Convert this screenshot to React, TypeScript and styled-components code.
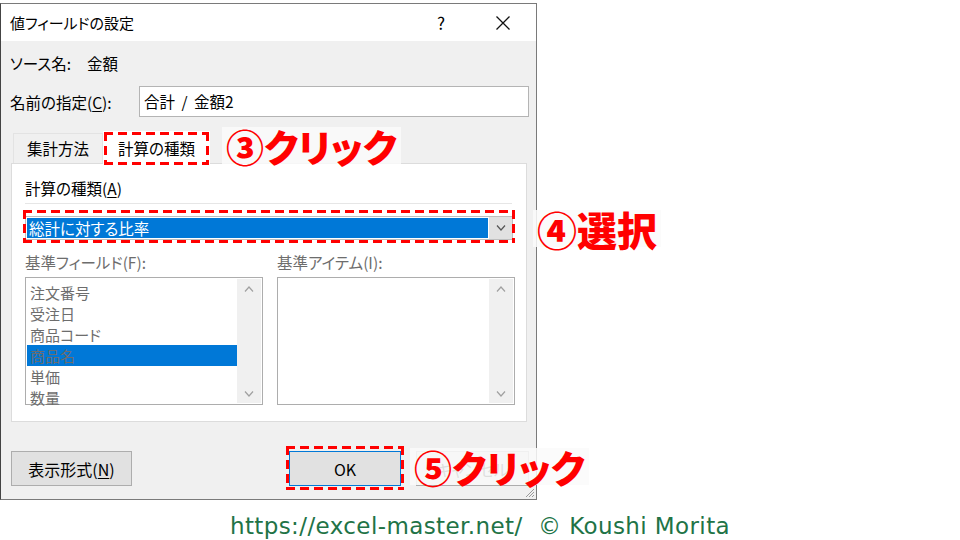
import React from "react";
import { createGlobalStyle, styled, css } from "styled-components";

const GlobalStyle = createGlobalStyle`
  html, body {
    margin: 0;
    padding: 0;
    background: #ffffff;
  }
  #root {
    width: 960px;
    height: 540px;
    overflow: hidden;
  }
`;

const uiFont = css`
  font-family: "Noto Sans CJK JP", "Noto Sans", sans-serif;
  font-feature-settings: "palt";
`;

// red dashed marker drawn around a highlighted control
const dashed = (top: number, right: number, bottom: number, left: number) => css`
  position: relative;
  &::after {
    content: "";
    position: absolute;
    top: -${top}px;
    right: -${right}px;
    bottom: -${bottom}px;
    left: -${left}px;
    pointer-events: none;
    z-index: 3;
    background:
      repeating-linear-gradient(90deg, #ff0000 0 9px, transparent 9px 14px) top left / 100% 3px no-repeat,
      repeating-linear-gradient(90deg, #ff0000 0 9px, transparent 9px 14px) bottom left / 100% 3px no-repeat,
      repeating-linear-gradient(180deg, #ff0000 0 9px, transparent 9px 14px) top left / 3px 100% no-repeat,
      repeating-linear-gradient(180deg, #ff0000 0 9px, transparent 9px 14px) top right / 3px 100% no-repeat;
  }
`;

const Page = styled.div`
  position: relative;
  width: 960px;
  height: 540px;
  padding-top: 3px;
  box-sizing: border-box;
`;

const Dialog = styled.div`
  position: relative;
  width: 537px;
  border: 1px solid #7a7a7a;
  border-left-color: #444;
  box-sizing: border-box;
  background: #f0f0f0;
  ${uiFont};
  color: #000;
`;

const TitleBar = styled.div`
  display: flex;
  align-items: center;
  height: 37px;
  background: #ffffff;
  padding-left: 9px;
`;

const Title = styled.div`
  flex: 1;
  font-size: 15px;
`;

const TitleButton = styled.div<{ $w: number }>`
  display: flex;
  align-items: center;
  justify-content: center;
  width: ${p => p.$w}px;
  height: 37px;
  font-size: 17px;
`;

const Body = styled.div`
  padding: 0 7px 13px 9px;
  font-size: 15.5px;
`;

const SourceRow = styled.div`
  margin-top: 11px;
  line-height: 22px;
  display: flex;
  gap: 16px;
`;

const NameRow = styled.div`
  margin-top: 12px;
  display: flex;
  align-items: center;
`;

const NameLabel = styled.div`
  width: 129px;
`;

const NameInput = styled.div`
  flex: 1;
  height: 31px;
  box-sizing: border-box;
  border: 1px solid #b4b4b4;
  background: #fff;
  padding-left: 4px;
  line-height: 29px;
  word-spacing: 3px;
`;

const Key = styled.span`
  text-decoration: underline;
  text-underline-offset: 2px;
`;

const TabStrip = styled.div`
  margin-top: 14px;
  margin-left: 3px;
  display: flex;
  align-items: flex-end;
  height: 32px;
`;

const Tab = styled.div<{ $active?: boolean }>`
  box-sizing: border-box;
  padding: 0 ${p => (p.$active ? 14 : 13)}px;
  line-height: ${p => (p.$active ? 32 : 29)}px;
  height: ${p => (p.$active ? 33 : 30)}px;
  margin-bottom: ${p => (p.$active ? -1 : 0)}px;
  background: ${p => (p.$active ? "#ffffff" : "#f0f0f0")};
  border: 1px solid ${p => (p.$active ? "#ffffff" : "#e3e3e3")};
  border-bottom: none;
  z-index: 1;
  ${p => p.$active && dashed(0, 0, 1, 0)}
`;

const Panel = styled.div`
  margin: 0 2px 0 1px;
  height: 259px;
  box-sizing: border-box;
  background: #ffffff;
  border: 1px solid #dcdcdc;
  padding: 13px 13px 0 13px;
`;

const PanelLabel = styled.div`
  line-height: 22px;
`;

const Divider = styled.div`
  margin-top: 4px;
  margin-right: 1px;
  height: 1px;
  background: #e6e6e6;
`;

const Combo = styled.div`
  margin-top: 12px;
  width: 488px;
  height: 24px;
  box-sizing: border-box;
  border: 1px solid #bfbfbf;
  display: flex;
  background: #fff;
  ${dashed(7, 3, 4, 3)}
`;

const ComboValue = styled.div`
  flex: 1;
  margin: 1px;
  background: #0078d7;
  color: #ffffff;
  line-height: 20px;
  padding-left: 2px;
`;

const ComboButton = styled.div`
  width: 23px;
  background: #e1e1e1;
  display: flex;
  align-items: center;
  justify-content: center;
`;

const FieldGrid = styled.div`
  margin-top: 11px;
  display: grid;
  grid-template-columns: 238px 238px;
  column-gap: 14px;
  color: #6d6d6d;
`;

const FieldLabel = styled.div`
  line-height: 22px;
`;

const ListBox = styled.div`
  margin-top: 4px;
  height: 128px;
  box-sizing: border-box;
  border: 1px solid #adadad;
  background: #fff;
  display: flex;
  padding: 1px;
`;

const ListItems = styled.div`
  flex: 1;
  padding-top: 3px;
`;

const ListItem = styled.div<{ $selected?: boolean }>`
  height: 21px;
  line-height: 21px;
  padding-left: 3px;
  font-size: 15px;
  background: ${p => (p.$selected ? "#0078d7" : "transparent")};
  color: #6d6d6d;
  overflow: hidden;
`;

const ScrollBar = styled.div`
  width: 24px;
  background: #f0f0f0;
  display: flex;
  flex-direction: column;
  justify-content: space-between;
  align-items: center;
  padding: 7px 0 6px;
`;

const ButtonRow = styled.div`
  margin-top: 29px;
  display: flex;
  align-items: center;
  padding-left: 1px;
`;

const Button = styled.div<{ $w: number; $default?: boolean }>`
  width: ${p => p.$w}px;
  height: 35px;
  box-sizing: border-box;
  background: #e1e1e1;
  border: 1px solid ${p => (p.$default ? "#0078d7" : "#adadad")};
  display: flex;
  align-items: center;
  justify-content: center;
  font-size: 16px;
  ${p =>
    p.$default &&
    css`
      margin-left: 157px;
      ${dashed(6, 4, 5, 4)}
    `}
`;

const CancelButton = styled(Button)`
  margin-left: 15px;
  color: #333;
`;

const Grip = styled.svg`
  position: absolute;
  right: 1px;
  bottom: 1px;
`;

const Note = styled.div<{ $tight?: boolean }>`
  position: absolute;
  z-index: 4;
  font-family: "Noto Sans CJK JP", sans-serif;
  font-weight: 900;
  color: #ff0000;
  font-size: ${p => (p.$tight ? 38 : 40)}px;
  line-height: 38px;
  height: 37px;
  font-feature-settings: ${p => (p.$tight ? '"palt"' : "normal")};
  background: rgba(250, 250, 250, 0.86);
  padding: 0 4px;
  white-space: nowrap;
`;

const Footer = styled.div`
  margin-top: 11px;
  text-align: center;
  font-family: "DejaVu Sans", "Noto Sans", sans-serif;
  font-size: 23px;
  line-height: 30px;
  color: #217346;
  letter-spacing: 0.4px;
`;

const Chevron = ({ up, color = "#a0a0a0" }: { up?: boolean; color?: string }) => (
  <svg width="10" height="6" viewBox="0 0 10 6">
    <path
      d={up ? "M1 5.5 L5 1 L9 5.5" : "M1 0.5 L5 5 L9 0.5"}
      fill="none"
      stroke={color}
      strokeWidth="1.2"
    />
  </svg>
);

const fields = ["注文番号", "受注日", "商品コード", "商品名", "単価", "数量"];

const App = () => {
  return (
    <Page>
      <GlobalStyle />
      <Dialog>
        <TitleBar>
          <Title>値フィールドの設定</Title>
          <TitleButton $w={46}>?</TitleButton>
          <TitleButton $w={46} style={{ marginLeft: 16, marginRight: 10 }}>
            <svg width="16" height="16" viewBox="0 0 16 16">
              <path d="M1.5 1.5 L14.5 14.5 M14.5 1.5 L1.5 14.5" stroke="#111" strokeWidth="1.3" />
            </svg>
          </TitleButton>
        </TitleBar>

        <Body>
          <SourceRow>
            <span>ソース名:</span>
            <span>金額</span>
          </SourceRow>

          <NameRow>
            <NameLabel>
              名前の指定(<Key>C</Key>):
            </NameLabel>
            <NameInput>合計 / 金額2</NameInput>
          </NameRow>

          <TabStrip>
            <Tab>集計方法</Tab>
            <Tab $active>計算の種類</Tab>
          </TabStrip>

          <Panel>
            <PanelLabel>
              計算の種類(<Key>A</Key>)
            </PanelLabel>
            <Divider />
            <Combo>
              <ComboValue>総計に対する比率</ComboValue>
              <ComboButton>
                <Chevron color="#555" />
              </ComboButton>
            </Combo>

            <FieldGrid>
              <div>
                <FieldLabel>基準フィールド(F):</FieldLabel>
                <ListBox>
                  <ListItems>
                    {fields.map(f => (
                      <ListItem key={f} $selected={f === "商品名"}>
                        {f}
                      </ListItem>
                    ))}
                  </ListItems>
                  <ScrollBar>
                    <Chevron up />
                    <Chevron />
                  </ScrollBar>
                </ListBox>
              </div>
              <div>
                <FieldLabel>基準アイテム(I):</FieldLabel>
                <ListBox>
                  <ListItems />
                  <ScrollBar>
                    <Chevron up />
                    <Chevron />
                  </ScrollBar>
                </ListBox>
              </div>
            </FieldGrid>
          </Panel>

          <ButtonRow>
            <Button $w={121}>
              表示形式(<Key>N</Key>)
            </Button>
            <Button $w={112} $default>
              OK
            </Button>
            <CancelButton $w={113}>キャンセル</CancelButton>
          </ButtonRow>
        </Body>

        <Grip width="11" height="11" viewBox="0 0 11 11">
          <path d="M10 2 L2 10 M10 5 L5 10 M10 8 L8 10" stroke="#9a9a9a" strokeWidth="1" />
        </Grip>
      </Dialog>

      <Note $tight style={{ left: 222, top: 127 }}>③クリック</Note>
      <Note style={{ left: 533, top: 210 }}>④選択</Note>
      <Note $tight style={{ left: 410, top: 448 }}>⑤クリック</Note>

      <Footer>https://excel-master.net/&nbsp;&nbsp;© Koushi Morita</Footer>
    </Page>
  );
};

export default App;
